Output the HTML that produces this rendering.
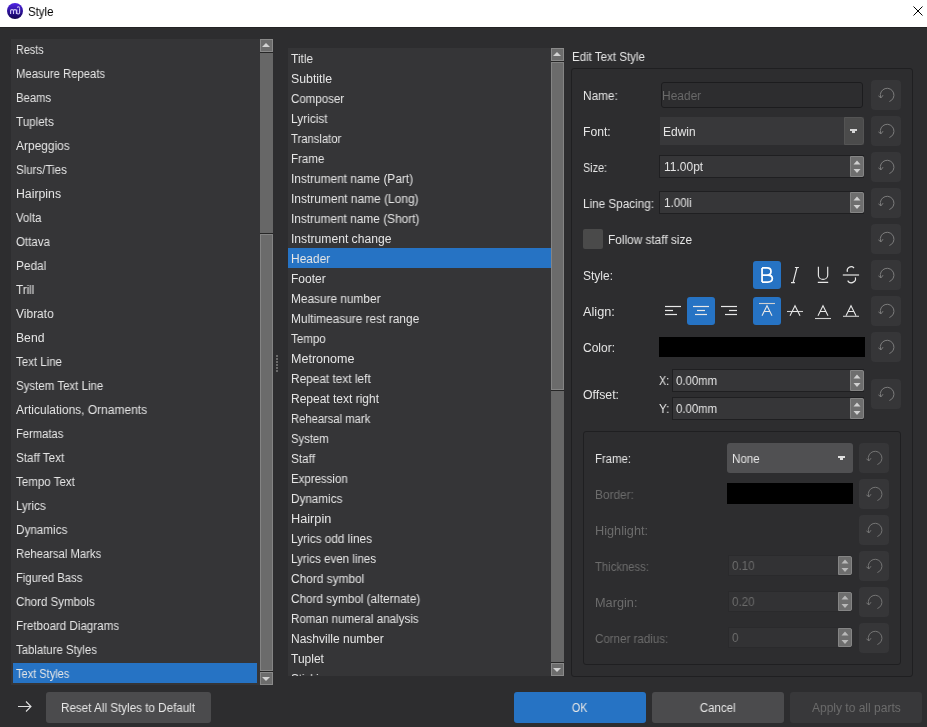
<!DOCTYPE html>
<html><head><meta charset="utf-8"><style>
html,body{margin:0;padding:0;}
body{width:927px;height:727px;position:relative;overflow:hidden;background:#2d2d2f;font-family:"Liberation Sans",sans-serif;font-size:12px;color:#e6e6e6;}
div{position:absolute;box-sizing:border-box;}
.t{line-height:12px;white-space:nowrap;transform:scaleX(0.955);transform-origin:0 0;will-change:transform;}
.sg{background:#676767;}
.sbtn{background:#6c6c6c;border:1px solid #8a8a8a;}
.shandle{background:#6b6b6b;border:1px solid #848484;}
.sline{height:1px;background:#262626;}
.tri-up{left:1px;top:3px;width:0;height:0;border-left:4px solid transparent;border-right:4px solid transparent;border-bottom:4px solid #d2d2d2;}
.tri-dn{left:1px;top:4px;width:0;height:0;border-left:4px solid transparent;border-right:4px solid transparent;border-top:4px solid #d2d2d2;}
.rb{background:#363638;border-radius:4px;}
.rb svg{position:absolute;left:0;top:0;}
.spin{background:#363638;border:1px solid #1f1f21;border-right:none;}
.spin.dis{background:#323234;border-color:#2a2a2c;}
.spbtn{background:#6e6e6e;border:1px solid #858585;border-radius:0 2px 2px 0;}
.btn{background:#4b4b4d;border-radius:3px;text-align:center;line-height:32px;}
.btn span{display:inline-block;transform:scaleX(0.955);will-change:transform;}
</style></head><body>
<div style="left:0;top:0;width:927px;height:27px;background:#fff;"></div>
<div style="left:0;top:27px;width:927px;height:1px;background:#232325;"></div>
<div style="left:7px;top:3px;width:16px;height:16px;border-radius:50%;background:linear-gradient(#5024e6,#220d80 70%,#150650);"></div>
<svg style="position:absolute;left:0;top:0" width="27" height="27"><path d="M10.6 14 V10.6 Q10.6 9.6 12 9.6 Q13.5 9.6 13.5 10.6 V14 M13.5 10.6 Q13.5 9.6 15 9.6 Q16.4 9.6 16.4 10.6 V14 M16.8 9.5 V12.8 Q16.8 14 18.2 14 Q19.6 14 19.6 12.8 V8.2 M17.3 7.6 Q18.4 5.8 19.6 7.8" fill="none" stroke="#cfc6f4" stroke-width="1.1"/></svg>
<div class="t" style="left:28px;top:6px;color:#000;font-size:12px">Style</div>
<svg style="position:absolute;left:912px;top:5px" width="13" height="13"><path d="M1.5 1.5 L10.5 10.5 M10.5 1.5 L1.5 10.5" stroke="#000" stroke-width="1"/></svg>
<div style="left:11px;top:39px;width:249px;height:646px;background:#353537;"></div>
<div style="left:13px;top:663px;width:244px;height:20px;background:#2673c4;"></div>
<div class="t" style="left:16px;top:44px;transform:scaleX(0.9);">Rests</div>
<div class="t" style="left:16px;top:68px;transform:scaleX(0.94);">Measure Repeats</div>
<div class="t" style="left:16px;top:92px;transform:scaleX(0.942);">Beams</div>
<div class="t" style="left:16px;top:116px;transform:scaleX(0.969);">Tuplets</div>
<div class="t" style="left:16px;top:140px;transform:scaleX(0.994);">Arpeggios</div>
<div class="t" style="left:16px;top:164px;transform:scaleX(0.96);">Slurs/Ties</div>
<div class="t" style="left:16px;top:188px;transform:scaleX(1.023);">Hairpins</div>
<div class="t" style="left:16px;top:212px;transform:scaleX(0.952);">Volta</div>
<div class="t" style="left:16px;top:236px;transform:scaleX(0.958);">Ottava</div>
<div class="t" style="left:16px;top:260px;transform:scaleX(0.986);">Pedal</div>
<div class="t" style="left:16px;top:284px;transform:scaleX(0.967);">Trill</div>
<div class="t" style="left:16px;top:308px;transform:scaleX(0.995);">Vibrato</div>
<div class="t" style="left:16px;top:332px;transform:scaleX(1.015);">Bend</div>
<div class="t" style="left:16px;top:356px;transform:scaleX(0.958);">Text Line</div>
<div class="t" style="left:16px;top:380px;transform:scaleX(0.957);">System Text Line</div>
<div class="t" style="left:16px;top:404px;transform:scaleX(0.997);">Articulations, Ornaments</div>
<div class="t" style="left:16px;top:428px;transform:scaleX(0.932);">Fermatas</div>
<div class="t" style="left:16px;top:452px;transform:scaleX(0.973);">Staff Text</div>
<div class="t" style="left:16px;top:476px;transform:scaleX(0.962);">Tempo Text</div>
<div class="t" style="left:16px;top:500px;transform:scaleX(0.953);">Lyrics</div>
<div class="t" style="left:16px;top:524px;transform:scaleX(0.973);">Dynamics</div>
<div class="t" style="left:16px;top:548px;transform:scaleX(0.939);">Rehearsal Marks</div>
<div class="t" style="left:16px;top:572px;transform:scaleX(0.937);">Figured Bass</div>
<div class="t" style="left:16px;top:596px;transform:scaleX(0.96);">Chord Symbols</div>
<div class="t" style="left:16px;top:620px;transform:scaleX(0.966);">Fretboard Diagrams</div>
<div class="t" style="left:16px;top:644px;transform:scaleX(0.947);">Tablature Styles</div>
<div class="t" style="left:16px;top:668px;transform:scaleX(0.919);">Text Styles</div>
<div class="sg" style="left:260px;top:39px;width:13px;height:646px"></div>
<div class="sbtn" style="left:260px;top:39px;width:13px;height:13px"><div class="tri-up"></div></div>
<div class="sline" style="left:260px;top:52px;width:13px"></div>
<div class="sbtn" style="left:260px;top:672px;width:13px;height:13px"><div class="tri-dn"></div></div>
<div class="sline" style="left:260px;top:671px;width:13px"></div>
<div class="shandle" style="left:260px;top:234px;width:13px;height:437px"></div>
<div class="sline" style="left:260px;top:233px;width:13px"></div>
<div class="sline" style="left:260px;top:671px;width:13px"></div>
<div style="left:276px;top:355px;width:2px;height:2px;background:#6a6a6a"></div>
<div style="left:276px;top:358px;width:2px;height:2px;background:#6a6a6a"></div>
<div style="left:276px;top:361px;width:2px;height:2px;background:#6a6a6a"></div>
<div style="left:276px;top:364px;width:2px;height:2px;background:#6a6a6a"></div>
<div style="left:276px;top:367px;width:2px;height:2px;background:#6a6a6a"></div>
<div style="left:276px;top:370px;width:2px;height:2px;background:#6a6a6a"></div>
<div style="left:288px;top:48px;width:263px;height:628px;background:#353537;overflow:hidden;">
<div style="left:0;top:200px;width:263px;height:20px;background:#2673c4;"></div>
<div class="t" style="left:3px;top:5px;transform:scaleX(0.991)">Title</div>
<div class="t" style="left:3px;top:25px;transform:scaleX(1.026)">Subtitle</div>
<div class="t" style="left:3px;top:45px;transform:scaleX(0.96)">Composer</div>
<div class="t" style="left:3px;top:65px;transform:scaleX(0.989)">Lyricist</div>
<div class="t" style="left:3px;top:85px;transform:scaleX(0.937)">Translator</div>
<div class="t" style="left:3px;top:105px;transform:scaleX(0.961)">Frame</div>
<div class="t" style="left:3px;top:125px;transform:scaleX(0.989)">Instrument name (Part)</div>
<div class="t" style="left:3px;top:145px;transform:scaleX(0.996)">Instrument name (Long)</div>
<div class="t" style="left:3px;top:165px;transform:scaleX(0.987)">Instrument name (Short)</div>
<div class="t" style="left:3px;top:185px;transform:scaleX(1.01)">Instrument change</div>
<div class="t" style="left:3px;top:205px;transform:scaleX(0.995)">Header</div>
<div class="t" style="left:3px;top:225px;transform:scaleX(0.997)">Footer</div>
<div class="t" style="left:3px;top:245px;transform:scaleX(0.987)">Measure number</div>
<div class="t" style="left:3px;top:265px;transform:scaleX(0.991)">Multimeasure rest range</div>
<div class="t" style="left:3px;top:285px;transform:scaleX(0.964)">Tempo</div>
<div class="t" style="left:3px;top:305px;transform:scaleX(1.044)">Metronome</div>
<div class="t" style="left:3px;top:325px;transform:scaleX(0.988)">Repeat text left</div>
<div class="t" style="left:3px;top:345px;transform:scaleX(0.999)">Repeat text right</div>
<div class="t" style="left:3px;top:365px;transform:scaleX(0.935)">Rehearsal mark</div>
<div class="t" style="left:3px;top:385px;transform:scaleX(0.941)">System</div>
<div class="t" style="left:3px;top:405px;transform:scaleX(0.979)">Staff</div>
<div class="t" style="left:3px;top:425px;transform:scaleX(0.955)">Expression</div>
<div class="t" style="left:3px;top:445px;transform:scaleX(0.973)">Dynamics</div>
<div class="t" style="left:3px;top:465px;transform:scaleX(1.06)">Hairpin</div>
<div class="t" style="left:3px;top:485px;transform:scaleX(0.985)">Lyrics odd lines</div>
<div class="t" style="left:3px;top:505px;transform:scaleX(0.964)">Lyrics even lines</div>
<div class="t" style="left:3px;top:525px;transform:scaleX(0.99)">Chord symbol</div>
<div class="t" style="left:3px;top:545px;transform:scaleX(0.979)">Chord symbol (alternate)</div>
<div class="t" style="left:3px;top:565px;transform:scaleX(0.966)">Roman numeral analysis</div>
<div class="t" style="left:3px;top:585px;transform:scaleX(1.0)">Nashville number</div>
<div class="t" style="left:3px;top:605px;transform:scaleX(1.0)">Tuplet</div>
<div class="t" style="left:3px;top:625px;transform:scaleX(0.965)">Sticking</div>
</div>
<div class="sg" style="left:551px;top:48px;width:13px;height:628px"></div>
<div class="sbtn" style="left:551px;top:48px;width:13px;height:13px"><div class="tri-up"></div></div>
<div class="sline" style="left:551px;top:61px;width:13px"></div>
<div class="sbtn" style="left:551px;top:663px;width:13px;height:13px"><div class="tri-dn"></div></div>
<div class="sline" style="left:551px;top:662px;width:13px"></div>
<div class="shandle" style="left:551px;top:62px;width:13px;height:328px"></div>
<div class="sline" style="left:551px;top:61px;width:13px"></div>
<div class="sline" style="left:551px;top:390px;width:13px"></div>
<div class="t" style="left:572px;top:51px;transform:scaleX(0.961);">Edit Text Style</div>
<div style="left:571px;top:68px;width:342px;height:609px;border:1px solid #1f1f21;border-radius:3px;"></div>
<div class="t" style="left:583px;top:90px;transform:scaleX(0.985);">Name:</div>
<div class="t" style="left:583px;top:126px;transform:scaleX(1.015);">Font:</div>
<div class="t" style="left:583px;top:162px;transform:scaleX(0.9);">Size:</div>
<div class="t" style="left:583px;top:198px;transform:scaleX(0.976);">Line Spacing:</div>
<div class="t" style="left:583px;top:270px;transform:scaleX(0.996);">Style:</div>
<div class="t" style="left:583px;top:306px;transform:scaleX(1.06);">Align:</div>
<div class="t" style="left:583px;top:342px;transform:scaleX(0.997);">Color:</div>
<div class="t" style="left:583px;top:389px;transform:scaleX(1.026);">Offset:</div>
<div class="rb" style="left:871px;top:80px;width:30px;height:30px"><svg width="30" height="30" viewBox="0 0 30 30"><path d="M9.6 17 A6.8 6.8 0 1 1 18.4 21.5" fill="none" stroke="#7c7c7c" stroke-width="1.0"/><path d="M7.4 15.9 L10 17.9 L12 15.2" fill="none" stroke="#7c7c7c" stroke-width="1.0" stroke-linejoin="round"/></svg></div>
<div class="rb" style="left:871px;top:116px;width:30px;height:30px"><svg width="30" height="30" viewBox="0 0 30 30"><path d="M9.6 17 A6.8 6.8 0 1 1 18.4 21.5" fill="none" stroke="#7c7c7c" stroke-width="1.0"/><path d="M7.4 15.9 L10 17.9 L12 15.2" fill="none" stroke="#7c7c7c" stroke-width="1.0" stroke-linejoin="round"/></svg></div>
<div class="rb" style="left:871px;top:152px;width:30px;height:30px"><svg width="30" height="30" viewBox="0 0 30 30"><path d="M9.6 17 A6.8 6.8 0 1 1 18.4 21.5" fill="none" stroke="#7c7c7c" stroke-width="1.0"/><path d="M7.4 15.9 L10 17.9 L12 15.2" fill="none" stroke="#7c7c7c" stroke-width="1.0" stroke-linejoin="round"/></svg></div>
<div class="rb" style="left:871px;top:188px;width:30px;height:30px"><svg width="30" height="30" viewBox="0 0 30 30"><path d="M9.6 17 A6.8 6.8 0 1 1 18.4 21.5" fill="none" stroke="#7c7c7c" stroke-width="1.0"/><path d="M7.4 15.9 L10 17.9 L12 15.2" fill="none" stroke="#7c7c7c" stroke-width="1.0" stroke-linejoin="round"/></svg></div>
<div class="rb" style="left:871px;top:224px;width:30px;height:30px"><svg width="30" height="30" viewBox="0 0 30 30"><path d="M9.6 17 A6.8 6.8 0 1 1 18.4 21.5" fill="none" stroke="#7c7c7c" stroke-width="1.0"/><path d="M7.4 15.9 L10 17.9 L12 15.2" fill="none" stroke="#7c7c7c" stroke-width="1.0" stroke-linejoin="round"/></svg></div>
<div class="rb" style="left:871px;top:260px;width:30px;height:30px"><svg width="30" height="30" viewBox="0 0 30 30"><path d="M9.6 17 A6.8 6.8 0 1 1 18.4 21.5" fill="none" stroke="#7c7c7c" stroke-width="1.0"/><path d="M7.4 15.9 L10 17.9 L12 15.2" fill="none" stroke="#7c7c7c" stroke-width="1.0" stroke-linejoin="round"/></svg></div>
<div class="rb" style="left:871px;top:296px;width:30px;height:30px"><svg width="30" height="30" viewBox="0 0 30 30"><path d="M9.6 17 A6.8 6.8 0 1 1 18.4 21.5" fill="none" stroke="#7c7c7c" stroke-width="1.0"/><path d="M7.4 15.9 L10 17.9 L12 15.2" fill="none" stroke="#7c7c7c" stroke-width="1.0" stroke-linejoin="round"/></svg></div>
<div class="rb" style="left:871px;top:332px;width:30px;height:30px"><svg width="30" height="30" viewBox="0 0 30 30"><path d="M9.6 17 A6.8 6.8 0 1 1 18.4 21.5" fill="none" stroke="#7c7c7c" stroke-width="1.0"/><path d="M7.4 15.9 L10 17.9 L12 15.2" fill="none" stroke="#7c7c7c" stroke-width="1.0" stroke-linejoin="round"/></svg></div>
<div class="rb" style="left:871px;top:379px;width:30px;height:30px"><svg width="30" height="30" viewBox="0 0 30 30"><path d="M9.6 17 A6.8 6.8 0 1 1 18.4 21.5" fill="none" stroke="#7c7c7c" stroke-width="1.0"/><path d="M7.4 15.9 L10 17.9 L12 15.2" fill="none" stroke="#7c7c7c" stroke-width="1.0" stroke-linejoin="round"/></svg></div>
<div style="left:661px;top:82px;width:202px;height:26px;border:1px solid #1c1c1e;border-radius:3px;"></div>
<div class="t" style="left:662px;top:90px;color:#6a6a6a;transform:scaleX(0.995);">Header</div>
<div style="left:660px;top:117px;width:204px;height:28px;background:#38383a;"></div>
<div style="left:844px;top:117px;width:20px;height:28px;background:#4b4b4b;border:1px solid #545454;border-radius:0 3px 3px 0;"></div>
<div style="left:850px;top:129px;width:7px;height:2px;background:#d6d6d6"></div><div style="left:852px;top:131px;width:3px;height:2px;background:#d6d6d6"></div>
<div class="t" style="left:663px;top:126px;transform:scaleX(0.997);">Edwin</div>
<div class="spin" style="left:659px;top:155px;width:205px;height:23px"></div>
<div class="spbtn" style="left:850px;top:156px;width:14px;height:21px"></div>
<svg style="position:absolute;left:850px;top:155px" width="14" height="23"><polygon points="3.5,9.5 10.5,9.5 7.0,5.5" fill="#d0d0d0"/><polygon points="3.5,13.9 10.5,13.9 7.0,17.9" fill="#d0d0d0"/></svg>
<div class="t" style="left:664px;top:161px;color:#e6e6e6;transform:scaleX(0.997);">11.00pt</div>
<div class="spin" style="left:659px;top:191px;width:205px;height:23px"></div>
<div class="spbtn" style="left:850px;top:192px;width:14px;height:21px"></div>
<svg style="position:absolute;left:850px;top:191px" width="14" height="23"><polygon points="3.5,9.5 10.5,9.5 7.0,5.5" fill="#d0d0d0"/><polygon points="3.5,13.9 10.5,13.9 7.0,17.9" fill="#d0d0d0"/></svg>
<div class="t" style="left:664px;top:197px;color:#e6e6e6;transform:scaleX(0.97);">1.00li</div>
<div style="left:583px;top:229px;width:20px;height:20px;background:#4a4a4a;border-radius:2px;"></div>
<div class="t" style="left:608px;top:234px;transform:scaleX(0.987);">Follow staff size</div>
<div style="left:753px;top:261px;width:28px;height:28px;border-radius:3px;background:#2673c4;"><svg width="28" height="28" style="position:absolute;left:0;top:0"><path d="M9.05 6.95 V21 M9.05 6.95 H14 C17.2 6.95 18 8.6 18 10.45 C18 12.3 17.2 14 14 14 H9.05 M14 14 H14.8 C18.5 14 19.3 15.9 19.3 17.5 C19.3 19.2 18.5 21 14.8 21 H9.05" fill="none" stroke="#fff" stroke-width="1.75"/></svg></div>
<div style="left:781px;top:261px;width:28px;height:28px;border-radius:3px;"><svg width="28" height="28" style="position:absolute;left:0;top:0"><path d="M16 6.5 L12.1 21.6 M13.9 6.5 H17.9 M10 21.6 H13.9" fill="none" stroke="#e8e8e8" stroke-width="1.15"/></svg></div>
<div style="left:809px;top:261px;width:28px;height:28px;border-radius:3px;"><svg width="28" height="28" style="position:absolute;left:0;top:0"><path d="M9.4 5.7 V14.2 A4.65 4.2 0 0 0 18.7 14.2 V5.7 M8.8 21.4 H19.2" fill="none" stroke="#e8e8e8" stroke-width="1.15"/></svg></div>
<div style="left:837px;top:261px;width:28px;height:28px;border-radius:3px;"><svg width="28" height="28" style="position:absolute;left:0;top:0"><path d="M17.03 6.97 A4 4 0 0 0 10.34 10.84 M18.34 16.34 A4.2 4.2 0 0 1 10.66 19.6" fill="none" stroke="#e8e8e8" stroke-width="1.15"/><path d="M5.8 14 H22.1" stroke="#9a9a9a" stroke-width="2"/></svg></div>
<div style="left:659px;top:297px;width:28px;height:28px;border-radius:3px;"><svg width="28" height="28" style="position:absolute;left:0;top:0"><path d="M6 9.5 H22" stroke="#e8e8e8" stroke-width="1.2"/><path d="M6 13.5 H14" stroke="#e8e8e8" stroke-width="1.2"/><path d="M6 17.5 H18" stroke="#e8e8e8" stroke-width="1.2"/></svg></div>
<div style="left:687px;top:297px;width:28px;height:28px;border-radius:3px;background:#2673c4;"><svg width="28" height="28" style="position:absolute;left:0;top:0"><path d="M6 9.5 H22" stroke="#e8e8e8" stroke-width="1.2"/><path d="M10 13.5 H18" stroke="#e8e8e8" stroke-width="1.2"/><path d="M8 17.5 H20" stroke="#e8e8e8" stroke-width="1.2"/></svg></div>
<div style="left:715px;top:297px;width:28px;height:28px;border-radius:3px;"><svg width="28" height="28" style="position:absolute;left:0;top:0"><path d="M6 9.5 H22" stroke="#e8e8e8" stroke-width="1.2"/><path d="M14 13.5 H22" stroke="#e8e8e8" stroke-width="1.2"/><path d="M10 17.5 H22" stroke="#e8e8e8" stroke-width="1.2"/></svg></div>
<div style="left:753px;top:297px;width:28px;height:28px;border-radius:3px;background:#2673c4;"><svg width="28" height="28" style="position:absolute;left:0;top:0"><path d="M6 6.5 H22" stroke="#d0d0d0" stroke-width="1.1"/><path d="M9 18.7 L14 8.7 L19 18.7 M11.2 14.5 H16.8" fill="none" stroke="#e8e8e8" stroke-width="1.1"/></svg></div>
<div style="left:781px;top:297px;width:28px;height:28px;border-radius:3px;"><svg width="28" height="28" style="position:absolute;left:0;top:0"><path d="M6 14.5 H22" stroke="#d0d0d0" stroke-width="1.1"/><path d="M9 18.7 L14 8.7 L19 18.7 M11.2 14.5 H16.8" fill="none" stroke="#e8e8e8" stroke-width="1.1"/></svg></div>
<div style="left:809px;top:297px;width:28px;height:28px;border-radius:3px;"><svg width="28" height="28" style="position:absolute;left:0;top:0"><path d="M6 21.5 H22" stroke="#d0d0d0" stroke-width="1.1"/><path d="M9 18.7 L14 8.7 L19 18.7 M11.2 14.5 H16.8" fill="none" stroke="#e8e8e8" stroke-width="1.1"/></svg></div>
<div style="left:837px;top:297px;width:28px;height:28px;border-radius:3px;"><svg width="28" height="28" style="position:absolute;left:0;top:0"><path d="M6 19.3 H22" stroke="#d0d0d0" stroke-width="1.1"/><path d="M9 18.7 L14 8.7 L19 18.7 M11.2 14.5 H16.8" fill="none" stroke="#e8e8e8" stroke-width="1.1"/></svg></div>
<div style="left:659px;top:337px;width:206px;height:20px;background:#000;"></div>
<div class="t" style="left:659px;top:375px;transform:scaleX(0.9);">X:</div>
<div class="t" style="left:659px;top:403px;transform:scaleX(0.97);">Y:</div>
<div class="spin" style="left:672px;top:369px;width:192px;height:23px"></div>
<div class="spbtn" style="left:850px;top:370px;width:14px;height:21px"></div>
<svg style="position:absolute;left:850px;top:369px" width="14" height="23"><polygon points="3.5,9.5 10.5,9.5 7.0,5.5" fill="#d0d0d0"/><polygon points="3.5,13.9 10.5,13.9 7.0,17.9" fill="#d0d0d0"/></svg>
<div class="t" style="left:676px;top:375px;color:#e6e6e6;transform:scaleX(0.949);">0.00mm</div>
<div class="spin" style="left:672px;top:397px;width:192px;height:23px"></div>
<div class="spbtn" style="left:850px;top:398px;width:14px;height:21px"></div>
<svg style="position:absolute;left:850px;top:397px" width="14" height="23"><polygon points="3.5,9.5 10.5,9.5 7.0,5.5" fill="#d0d0d0"/><polygon points="3.5,13.9 10.5,13.9 7.0,17.9" fill="#d0d0d0"/></svg>
<div class="t" style="left:676px;top:403px;color:#e6e6e6;transform:scaleX(0.949);">0.00mm</div>
<div style="left:583px;top:431px;width:318px;height:234px;border:1px solid #1f1f21;border-radius:3px;"></div>
<div class="t" style="left:595px;top:453px;transform:scaleX(0.947);">Frame:</div>
<div class="t" style="left:595px;top:489px;color:#6c6c6c;transform:scaleX(0.987);">Border:</div>
<div class="t" style="left:595px;top:525px;color:#6c6c6c;transform:scaleX(1.06);">Highlight:</div>
<div class="t" style="left:595px;top:561px;color:#6c6c6c;transform:scaleX(0.94);">Thickness:</div>
<div class="t" style="left:595px;top:597px;color:#6c6c6c;transform:scaleX(1.06);">Margin:</div>
<div class="t" style="left:595px;top:633px;color:#6c6c6c;transform:scaleX(0.963);">Corner radius:</div>
<div class="rb" style="left:859px;top:443px;width:30px;height:30px"><svg width="30" height="30" viewBox="0 0 30 30"><path d="M9.6 17 A6.8 6.8 0 1 1 18.4 21.5" fill="none" stroke="#747474" stroke-width="1.0"/><path d="M7.4 15.9 L10 17.9 L12 15.2" fill="none" stroke="#747474" stroke-width="1.0" stroke-linejoin="round"/></svg></div>
<div class="rb" style="left:859px;top:479px;width:30px;height:30px"><svg width="30" height="30" viewBox="0 0 30 30"><path d="M9.6 17 A6.8 6.8 0 1 1 18.4 21.5" fill="none" stroke="#747474" stroke-width="1.0"/><path d="M7.4 15.9 L10 17.9 L12 15.2" fill="none" stroke="#747474" stroke-width="1.0" stroke-linejoin="round"/></svg></div>
<div class="rb" style="left:859px;top:515px;width:30px;height:30px"><svg width="30" height="30" viewBox="0 0 30 30"><path d="M9.6 17 A6.8 6.8 0 1 1 18.4 21.5" fill="none" stroke="#747474" stroke-width="1.0"/><path d="M7.4 15.9 L10 17.9 L12 15.2" fill="none" stroke="#747474" stroke-width="1.0" stroke-linejoin="round"/></svg></div>
<div class="rb" style="left:859px;top:551px;width:30px;height:30px"><svg width="30" height="30" viewBox="0 0 30 30"><path d="M9.6 17 A6.8 6.8 0 1 1 18.4 21.5" fill="none" stroke="#747474" stroke-width="1.0"/><path d="M7.4 15.9 L10 17.9 L12 15.2" fill="none" stroke="#747474" stroke-width="1.0" stroke-linejoin="round"/></svg></div>
<div class="rb" style="left:859px;top:587px;width:30px;height:30px"><svg width="30" height="30" viewBox="0 0 30 30"><path d="M9.6 17 A6.8 6.8 0 1 1 18.4 21.5" fill="none" stroke="#747474" stroke-width="1.0"/><path d="M7.4 15.9 L10 17.9 L12 15.2" fill="none" stroke="#747474" stroke-width="1.0" stroke-linejoin="round"/></svg></div>
<div class="rb" style="left:859px;top:623px;width:30px;height:30px"><svg width="30" height="30" viewBox="0 0 30 30"><path d="M9.6 17 A6.8 6.8 0 1 1 18.4 21.5" fill="none" stroke="#747474" stroke-width="1.0"/><path d="M7.4 15.9 L10 17.9 L12 15.2" fill="none" stroke="#747474" stroke-width="1.0" stroke-linejoin="round"/></svg></div>
<div style="left:727px;top:443px;width:126px;height:30px;background:#505052;border-radius:3px;"></div>
<div style="left:838px;top:456px;width:7px;height:2px;background:#e0e0e0"></div><div style="left:840px;top:458px;width:3px;height:2px;background:#e0e0e0"></div>
<div class="t" style="left:732px;top:453px;transform:scaleX(0.965);">None</div>
<div style="left:727px;top:483px;width:126px;height:21px;background:#000;"></div>
<div class="spin dis" style="left:728px;top:555px;width:124px;height:21px"></div>
<div class="spbtn" style="left:838px;top:556px;width:14px;height:19px"></div>
<svg style="position:absolute;left:838px;top:555px" width="14" height="21"><polygon points="3.5,8.5 10.5,8.5 7.0,4.5" fill="#b8b8b8"/><polygon points="3.5,12.9 10.5,12.9 7.0,16.9" fill="#b8b8b8"/></svg>
<div class="t" style="left:732px;top:560px;color:#6c6c6c;transform:scaleX(0.965);">0.10</div>
<div class="spin dis" style="left:728px;top:591px;width:124px;height:21px"></div>
<div class="spbtn" style="left:838px;top:592px;width:14px;height:19px"></div>
<svg style="position:absolute;left:838px;top:591px" width="14" height="21"><polygon points="3.5,8.5 10.5,8.5 7.0,4.5" fill="#b8b8b8"/><polygon points="3.5,12.9 10.5,12.9 7.0,16.9" fill="#b8b8b8"/></svg>
<div class="t" style="left:732px;top:596px;color:#6c6c6c;transform:scaleX(0.965);">0.20</div>
<div class="spin dis" style="left:728px;top:627px;width:124px;height:21px"></div>
<div class="spbtn" style="left:838px;top:628px;width:14px;height:19px"></div>
<svg style="position:absolute;left:838px;top:627px" width="14" height="21"><polygon points="3.5,8.5 10.5,8.5 7.0,4.5" fill="#b8b8b8"/><polygon points="3.5,12.9 10.5,12.9 7.0,16.9" fill="#b8b8b8"/></svg>
<div class="t" style="left:732px;top:632px;color:#6c6c6c;transform:scaleX(0.965);">0</div>
<svg style="position:absolute;left:17px;top:700px" width="16" height="13"><path d="M1 6.5 H14 M9 1.5 L14 6.5 L9 11.5" fill="none" stroke="#e0e0e0" stroke-width="1.1"/></svg>
<div class="btn" style="left:46px;top:692px;width:165px;height:31px;"><span style="transform:scaleX(0.971)">Reset All Styles to Default</span></div>
<div class="btn" style="left:514px;top:692px;width:132px;height:31px;background:#2673c4"><span style="transform:scaleX(0.9)">OK</span></div>
<div class="btn" style="left:652px;top:692px;width:132px;height:31px;"><span style="transform:scaleX(0.959)">Cancel</span></div>
<div class="btn" style="left:790px;top:692px;width:132px;height:31px;background:#38383a;color:#6c6c6c"><span style="transform:scaleX(0.999)">Apply to all parts</span></div>
</body></html>
